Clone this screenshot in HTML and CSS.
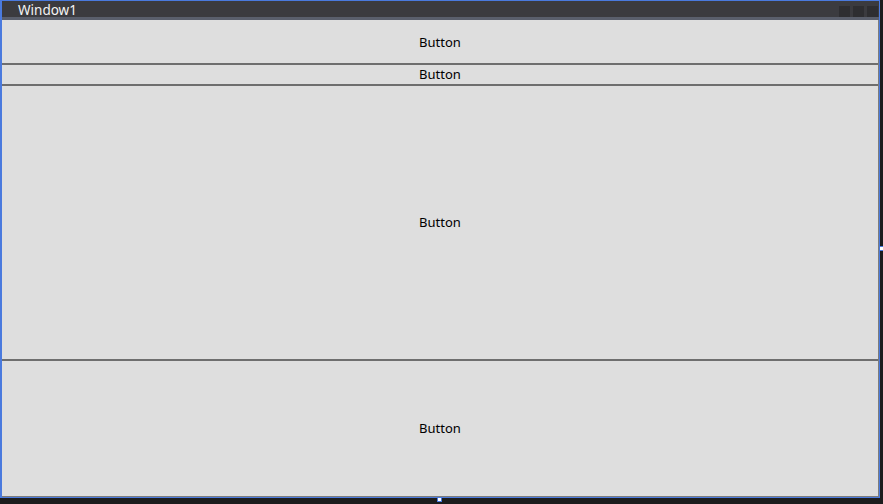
FILE: index.html
```html
<!DOCTYPE html>
<html>
<head>
<meta charset="utf-8">
<link rel="stylesheet" href="styles.css">
</head>
<body>
<div class="window">
  <div class="titlebar">
    <span class="title">Window1</span>
    <div class="ctrls"><span class="ctrl"></span><span class="ctrl"></span><span class="ctrl"></span></div>
  </div>
  <div class="content">
    <div class="btn b1">Button</div>
    <div class="btn b2">Button</div>
    <div class="btn b3">Button</div>
    <div class="btn b4">Button</div>
  </div>
  <span class="grip grip-r"></span>
  <span class="grip grip-b"></span>
</div>
</body>
</html>
```
FILE: styles.css
```css
html, body {
  margin: 0;
  padding: 0;
  background: #1c1c1d;
  width: 883px;
  height: 504px;
  overflow: hidden;
}
.window {
  position: relative;
  width: 880px;
  height: 498px;
  box-sizing: border-box;
  border: 1px solid #4a7ade;
  border-left-width: 2px;
  display: flex;
  flex-direction: column;
  font-family: "Noto Sans", "Open Sans", sans-serif;
}
.titlebar {
  height: 16px;
  background: #3b3b3f;
  border-bottom: 3px solid #5a5f6c;
  display: flex;
  align-items: center;
  justify-content: space-between;
  padding-left: 16px;
  padding-right: 1px;
  flex: none;
}
.title {
  color: #f4f4f4;
  font-size: 13.5px;
  line-height: 16px;
  padding-top: 1px;
}
.ctrls {
  display: flex;
  gap: 3px;
  padding-top: 5px;
}
.ctrl {
  width: 11px;
  height: 11px;
  background: #2e2e31;
}
.content {
  flex: 1;
  display: flex;
  flex-direction: column;
  background: #dedede;
  border-right: 1px solid #7c7c7c;
  border-bottom: 1px solid #7c7c7c;
}
.btn {
  display: flex;
  align-items: center;
  justify-content: center;
  color: #000;
  font-size: 13px;
  background: #dedede;
  border-top: 1px solid #6e6e6e;
  border-bottom: 1px solid #6e6e6e;
  box-sizing: content-box;
  flex: none;
}
.b1 { height: 43px; border-top: none; }
.b2 { height: 18px; padding-bottom: 1px; }
.b3 { height: 271px; padding-bottom: 2px; }
.b4 { flex: 1; border-bottom: none; padding-bottom: 2px; }
.grip {
  position: absolute;
  width: 3px;
  height: 3px;
  background: #ffffff;
  border: 1px solid #4a7ade;
}
.grip-r { right: -5px; top: 245px; }
.grip-b { left: 435px; bottom: -5px; }
```
